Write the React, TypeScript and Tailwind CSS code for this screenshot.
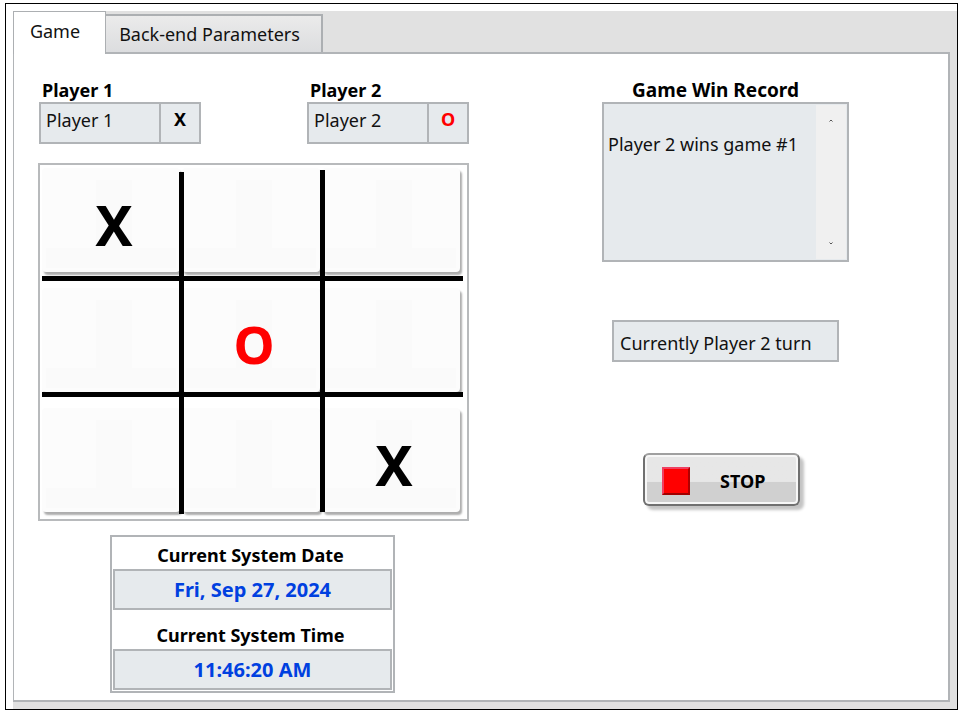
import { useState } from "react";

type Mark = "X" | "O" | "";

const initialBoard: Mark[] = ["X", "", "", "", "O", "", "", "", "X"];

const field = "border-2 border-[#b1b4b7] bg-[#e6eaed]";

function PlayerField({ id, label, mark, markClass }: { id: string; label: string; mark: string; markClass: string }) {
  return (
    <div className="w-[162px]">
      <label htmlFor={id} className="block pl-[3px] text-[18px] leading-6 font-bold text-black">
        {label}
      </label>
      <div className={`flex h-[42px] ${field}`}>
        <input
          id={id}
          defaultValue={label}
          className="min-w-0 flex-1 bg-transparent pb-[6px] pl-[5px] text-[18px] leading-6 outline-none"
        />
        <output
          aria-label={`${label} mark`}
          className={`w-10 border-l-2 border-[#b1b4b7] pt-[3px] text-center text-[18px] leading-6 font-bold ${markClass}`}
        >
          {mark}
        </output>
      </div>
    </div>
  );
}

function Cell({ mark, index, onPlay }: { mark: Mark; index: number; onPlay: () => void }) {
  return (
    <button
      type="button"
      aria-label={`Cell ${index + 1} ${mark}`}
      onClick={onPlay}
      className="relative mr-[2px] flex h-[104px] items-center justify-center rounded bg-[#fcfcfc] pt-2 pl-[6px] leading-none font-bold shadow-[2px_3px_2px_#adadad]"
    >
      <span className="absolute top-3 bottom-6 left-[54px] w-9 bg-[#fafafa]" />
      <span className="absolute inset-x-1 bottom-1 h-5 bg-[#fafafa]" />
      <span className={mark === "O" ? "relative text-[52px] text-[#ff0000]" : "relative text-[56px] text-black"}>{mark}</span>
    </button>
  );
}

function Board() {
  const [cells, setCells] = useState<Mark[]>(initialBoard);
  const play = (i: number) => setCells(cells.map((c, j) => (j === i && c === "" ? "O" : c)));
  return (
    <div className="relative mt-[19px] border-2 border-[#b8babc] pt-[3px] pr-[5px] pb-[7px] pl-[2px]">
      <div className="grid grid-cols-3 gap-y-4">
        {cells.map((mark, i) => (
          <Cell key={i} index={i} mark={mark} onPlay={() => play(i)} />
        ))}
      </div>
      <div className="absolute top-[7px] left-[139px] h-[342px] w-[5px] bg-black" />
      <div className="absolute top-[5px] left-[280px] h-[342px] w-[5px] bg-black" />
      <div className="absolute top-[111px] right-1 left-[2px] h-[5px] bg-black" />
      <div className="absolute top-[227px] right-1 left-[2px] h-[5px] bg-black" />
    </div>
  );
}

function ClockField({ label, value, id }: { label: string; value: string; id: string }) {
  return (
    <div>
      <label htmlFor={id} className="block pr-1 text-center text-[18px] leading-7 font-bold text-black">
        {label}
      </label>
      <output
        id={id}
        className={`flex h-[41px] items-center justify-center text-[20px] leading-6 font-bold text-[#0040e0] ${field}`}
      >
        {value}
      </output>
    </div>
  );
}

export default function App() {
  return (
    <div className="flex min-h-screen bg-white px-[5px] pt-[3px] pb-[4px] font-['Noto_Sans','Open_Sans',sans-serif] text-[18px] text-[#111]">
      <main className="flex flex-1 border border-black pt-[7px] pl-[7px]">
        <div className="flex flex-1 flex-col bg-[#e1e1e1] pr-[7px] pb-[7px]">
          <div role="tablist" className="flex h-[41px] items-end">
            <button
              type="button"
              role="tab"
              aria-selected="true"
              className="relative z-10 -mb-[2px] h-[43px] w-[93px] border-t border-r border-l border-[#acafb2] bg-white pr-[9px] pb-[3px] text-[18px]"
            >
              Game
            </button>
            <button
              type="button"
              role="tab"
              aria-selected="false"
              className="h-[38px] w-[217px] border-t-2 border-r-2 border-[#acafb2] bg-linear-to-b from-[#ebebeb] to-[#dcdddf] pr-2 text-[18px] whitespace-nowrap"
            >
              Back-end Parameters
            </button>
          </div>
          <section
            role="tabpanel"
            aria-label="Game"
            className="flex flex-1 items-start border-2 border-l border-[#b1b4b7] bg-white pt-6 pb-[5px] pl-[24px]"
          >
            <div className="w-[431px] shrink-0">
              <div className="flex justify-between pl-px">
                <PlayerField id="p1" label="Player 1" mark="X" markClass="text-black" />
                <PlayerField id="p2" label="Player 2" mark="O" markClass="text-[#ff0000]" />
              </div>
              <Board />
              <div className="mt-[14px] ml-[72px] flex w-[285px] flex-col gap-[11px] border-2 border-[#b1b4b7] px-px pt-1 pb-px">
                <ClockField id="date" label="Current System Date" value="Fri, Sep 27, 2024" />
                <ClockField id="time" label="Current System Time" value="11:46:20 AM" />
              </div>
            </div>
            <div className="ml-[133px] flex w-[247px] flex-col items-center">
              <label htmlFor="record" className="pr-5 text-[19px] leading-6 font-bold whitespace-nowrap text-black">
                Game Win Record
              </label>
              <div className={`flex h-[160px] w-full p-px ${field}`}>
                <textarea
                  id="record"
                  readOnly
                  defaultValue={"\nPlayer 2 wins game #1"}
                  className="min-w-0 flex-1 resize-none overflow-hidden bg-transparent pt-[2px] pl-[3px] text-[18px] leading-[25px] whitespace-pre outline-none"
                />
                <div className="flex w-[30px] flex-col items-center justify-between bg-[#f0f0f0] pt-[14px] pb-[14px]">
                  <svg width="4" height="3" viewBox="0 0 4 3" fill="none" stroke="#555">
                    <path d="M.5 2.5 2 1l1.500 1.500" />
                  </svg>
                  <svg width="4" height="3" viewBox="0 0 4 3" fill="none" stroke="#555">
                    <path d="M.5.5 2 2 3.500.5" />
                  </svg>
                </div>
              </div>
              <output className={`mt-[58px] flex h-[42px] w-[227px] items-center pt-1 pl-[6px] whitespace-nowrap ${field}`}>
                Currently Player 2 turn
              </output>
              <button
                type="button"
                className="mt-[91px] mr-2 flex h-[53px] w-[157px] items-center rounded-md border-2 border-[#707070] border-t-[#a0a0a0] bg-linear-to-b from-[#e7e7e7] from-54% to-[#d0d0d0] to-56% pt-[2px] pl-[17px] font-bold text-black shadow-[inset_0_0_0_2px_#f7f7f7,4px_4px_3px_#c4c4c4]"
              >
                <span className="h-7 w-7 border-2 border-t-[#f04060] border-r-[#b00000] border-b-[#a00000] border-l-[#f04060] bg-[#ff0000]" />
                <span className="ml-[30px] pt-px">STOP</span>
              </button>
            </div>
          </section>
        </div>
      </main>
    </div>
  );
}
